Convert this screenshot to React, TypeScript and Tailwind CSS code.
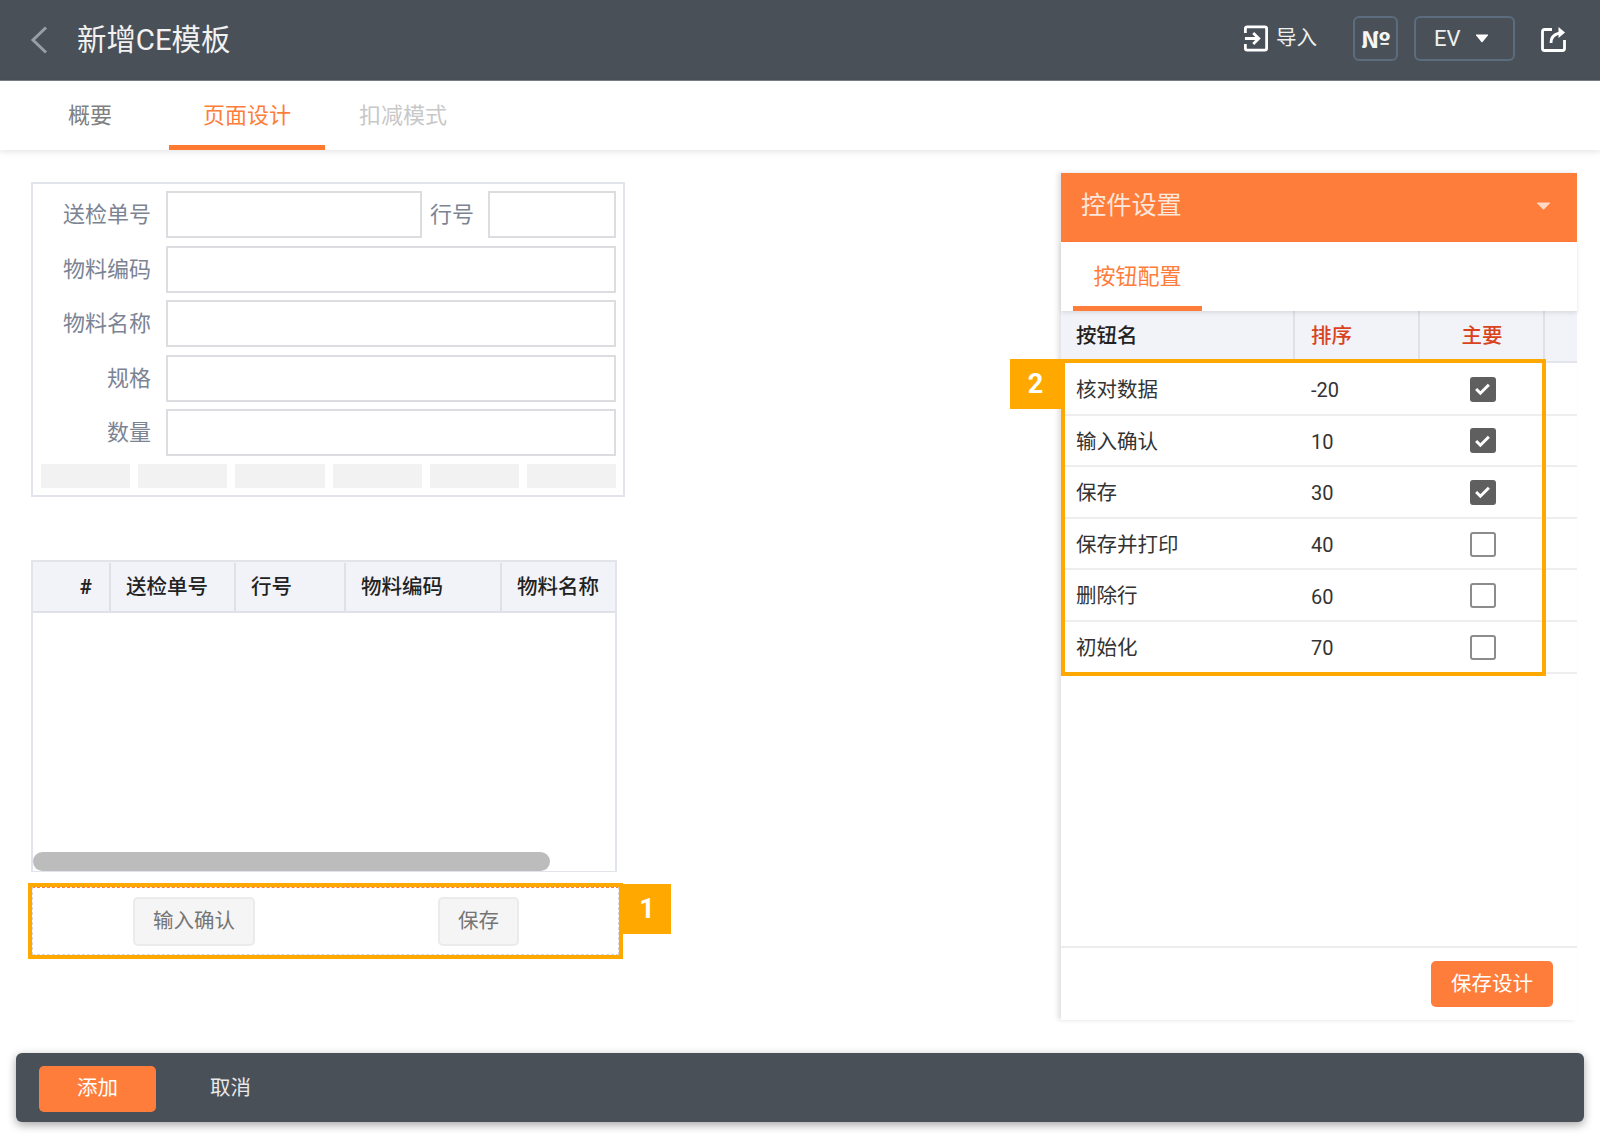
import { useState } from 'react';

const formRows = [
  { label: '物料编码' },
  { label: '物料名称' },
  { label: '规格' },
  { label: '数量' },
];

const buttonRows = [
  { name: '核对数据', sort: '-20', main: true },
  { name: '输入确认', sort: '10', main: true },
  { name: '保存', sort: '30', main: true },
  { name: '保存并打印', sort: '40', main: false },
  { name: '删除行', sort: '60', main: false },
  { name: '初始化', sort: '70', main: false },
];

function Caret({ className }: { className: string }) {
  return (
    <svg className={className} viewBox="0 0 14 10" fill="currentColor" preserveAspectRatio="none">
      <path d="M1 1.5 Q0.4 0.6 1.6 0.6 H12.4 Q13.6 0.6 13 1.5 L7.6 9 Q7 9.6 6.4 9 Z" />
    </svg>
  );
}

function Checkbox({ checked }: { checked: boolean }) {
  if (checked) {
    return (
      <div className="flex h-[25px] w-[26px] items-center justify-center rounded-[3px] bg-[#5f5f5f]">
        <svg width="17" height="14" viewBox="0 0 16 13" fill="none" stroke="#fff" strokeWidth="2.8">
          <path d="M2 6.5 L6 10.5 L14 2.5" />
        </svg>
      </div>
    );
  }
  return <div className="h-[25px] w-[26px] rounded-[3px] border-2 border-[#8c8c8c] bg-white" />;
}

function Badge({ text, className }: { text: string; className: string }) {
  return (
    <div
      className={`absolute flex h-[50px] items-center justify-center bg-[#ffa900] text-[27px] font-bold text-white ${className}`}
    >
      {text}
    </div>
  );
}

export default function App() {
  const [tab] = useState('页面设计');

  return (
    <div className="flex h-[1138px] w-full flex-col overflow-hidden bg-white font-['Roboto','Noto_Sans_CJK_SC',sans-serif]">
      {/* Header */}
      <div className="flex h-[81px] shrink-0 items-center border-b border-[#7b8087] bg-[#4a5058] pr-[33px] pl-[30px]">
        <svg width="18" height="28" viewBox="0 0 18 28" fill="none" stroke="#9a9ea3" strokeWidth="3">
          <path d="M16 1.5 L3 14 L16 26.5" />
        </svg>
        <div className="ml-[29px] text-[29.4px] text-[#f2f2f2]">新增CE模板</div>
        <div className="ml-auto mb-[3px] flex items-center">
          <svg width="24" height="27" viewBox="0 0 26 28" fill="none" stroke="#fff" strokeWidth="3">
            <path d="M1.5 8 V3.5 Q1.5 1.5 3.5 1.5 H22.5 Q24.5 1.5 24.5 3.5 V24.5 Q24.5 26.5 22.5 26.5 H3.5 Q1.5 26.5 1.5 24.5 V20" />
            <path d="M1 14 H15 M10 8 L16 14 L10 20" />
          </svg>
          <span className="ml-[8px] text-[20.5px] text-[#f0f0f0]">导入</span>
          <div className="ml-[36px] flex h-[45px] w-[45px] items-center justify-center rounded-[6px] border-2 border-[#5b6c7e] font-['Noto_Sans_CJK_SC',sans-serif] text-[23px] font-bold text-[#f5f5f5]">
            <span className="inline-block scale-x-[1.2]">№</span>
          </div>
          <div className="ml-[16px] flex h-[45px] w-[101px] items-center rounded-[6px] border-2 border-[#5b6c7e] pl-[18px] text-[22px] text-[#f0f0f0]">
            EV
            <Caret className="ml-[14px] h-[9px] w-[14px] text-white" />
          </div>
          <svg className="ml-[26px]" width="26" height="26" viewBox="0 0 26 26" fill="none" stroke="#fff" strokeWidth="2.8">
            <path d="M11 3.5 H3.5 Q1.5 3.5 1.5 5.5 V22.5 Q1.5 24.5 3.5 24.5 H21.5 Q23.5 24.5 23.5 22.5 V14" />
            <path d="M10 17 Q10 8 20 7" />
            <path d="M17.5 1 L24 6.5 L17.5 12 Z" fill="#fff" stroke="none" />
          </svg>
        </div>
      </div>

      {/* Tabs */}
      <div className="relative z-10 flex h-[69px] shrink-0 items-stretch bg-white pl-[68px] text-[22px] shadow-[0_2px_6px_rgba(0,0,0,0.1)]">
        <div className="mr-[57px] flex items-center text-[#808080]">概要</div>
        <div className="flex items-center border-b-[5px] border-[#ff7a30] px-[34px] pt-[5px] text-[#ff7d3b]">{tab}</div>
        <div className="ml-[34px] flex items-center text-[#c8c8c8]">扣减模式</div>
      </div>

      {/* Main */}
      <div className="flex h-[903px] shrink-0">
        <div className="pt-[32px] pl-[31px]">
          {/* Form */}
          <div className="flex h-[315px] w-[594px] flex-col gap-[7.5px] border-2 border-[#e2e4ec] pt-[7px] pr-[7px] pl-[8px]">
            <div className="flex h-[47px] items-center text-[22px] text-[#7c8494]">
              <div className="w-[110px] text-right">送检单号</div>
              <div className="ml-[15px] h-full w-[256px] border-2 border-[#dcdde0]" />
              <div className="ml-[8px] w-[44px]">行号</div>
              <div className="ml-[14px] h-full flex-1 border-2 border-[#dcdde0]" />
            </div>
            {formRows.map((row) => (
              <div key={row.label} className="flex h-[47px] items-center text-[22px] text-[#7c8494]">
                <div className="w-[110px] text-right">{row.label}</div>
                <div className="ml-[15px] h-full flex-1 border-2 border-[#dcdde0]" />
              </div>
            ))}
            <div className="flex h-[24px] gap-[8px]">
              {[0, 1, 2, 3, 4, 5].map((i) => (
                <div key={i} className="flex-1 bg-[#f2f2f2]" />
              ))}
            </div>
          </div>

          {/* Table */}
          <div className="mt-[63px] flex h-[312px] w-[586px] flex-col border-x-2 border-t-2 border-b border-[#e2e4ec]">
            <div className="flex h-[51px] shrink-0 border-b-2 border-[#dfe1e8] bg-[#f2f3f8] pt-[1px] text-[20.5px] font-medium text-[#222]">
              <div className="flex w-[78px] items-center justify-end border-r-2 border-[#dfe1e8] pr-[17px] font-bold">#</div>
              <div className="flex w-[125px] items-center border-r-2 border-[#dfe1e8] pl-[15px]">送检单号</div>
              <div className="flex w-[110px] items-center border-r-2 border-[#dfe1e8] pl-[15px]">行号</div>
              <div className="flex w-[156px] items-center border-r-2 border-[#dfe1e8] pl-[15px]">物料编码</div>
              <div className="flex flex-1 items-center pl-[15px]">物料名称</div>
            </div>
            <div className="flex flex-1 items-end">
              <div className="h-[19px] w-[517px] rounded-full bg-[#bcbcbc]" />
            </div>
          </div>

          {/* Toolbar */}
          <div className="relative mt-[11px] ml-[-3px] h-[76px] w-[595px] border-4 border-[#ffa900]">
            <div className="flex h-full items-center border border-dashed border-[#d5d7e0] border-t-[#ff7d3b]">
              <div className="ml-[100px] flex h-[49px] w-[122px] items-center justify-center rounded-[5px] border-2 border-[#ebebeb] bg-[#f5f5f5] text-[20.5px] text-[#757575]">
                输入确认
              </div>
              <div className="ml-[183px] flex h-[49px] w-[81px] items-center justify-center rounded-[5px] border-2 border-[#ebebeb] bg-[#f5f5f5] text-[20.5px] text-[#757575]">
                保存
              </div>
            </div>
            <Badge text="1" className="top-[-3px] left-[591px] w-[48px]" />
          </div>
        </div>

        {/* Right panel */}
        <div className="mt-[23px] mr-[23px] ml-auto flex h-[847px] w-[516px] flex-col shadow-[-3px_0_5px_rgba(0,0,0,0.12)]">
          <div className="flex h-[69px] shrink-0 items-center justify-between bg-[#ff7d3b] pr-[26px] pb-[3px] pl-[20px] text-[25.2px] text-[#fde6da]">
            控件设置
            <Caret className="h-[8px] w-[15px] text-[#ffd9c6]" />
          </div>
          <div className="relative z-10 flex h-[69px] shrink-0 bg-white pl-[12px] shadow-[0_2px_4px_rgba(0,0,0,0.1)]">
            <div className="flex w-[129px] items-center justify-center border-b-[5px] border-[#ff7d3b] pt-[5px] text-[22px] text-[#ff7d3b]">
              按钮配置
            </div>
          </div>

          <div className="relative flex-1">
            <div className="grid h-[52px] grid-cols-[234px_125px_125px_1fr] border-b-2 border-[#e4e5ea] bg-[#f2f3f8] text-[20.5px] font-medium">
              <div className="flex items-center border-r-2 border-[#dfe1e8] pl-[15px] text-[#222]">按钮名</div>
              <div className="flex items-center border-r-2 border-[#dfe1e8] pl-[16px] text-[#d8431d]">排序</div>
              <div className="flex items-center justify-center border-r-2 border-[#dfe1e8] pl-[1px] text-[#d8431d]">主要</div>
              <div />
            </div>
            <div className="pt-[1px]">
              {buttonRows.map((row) => (
                <div
                  key={row.name}
                  className="grid h-[51.6px] grid-cols-[234px_125px_125px_1fr] border-b-2 border-[#eeeeee] pt-[1px] text-[#333]"
                >
                  <div className="flex items-center pt-[2px] pl-[15px] text-[20.5px]">{row.name}</div>
                  <div className="flex items-center pt-[2px] pl-[16px] text-[20px]">{row.sort}</div>
                  <div className="flex items-center justify-center">
                    <Checkbox checked={row.main} />
                  </div>
                </div>
              ))}
            </div>

            {/* Highlight over the rows */}
            <div className="pointer-events-none absolute top-[48px] left-0 h-[317px] w-[485px] border-4 border-[#ffa900]" />
            <Badge text="2" className="top-[48px] left-[-51px] w-[51px]" />
          </div>

          <div className="flex h-[74px] shrink-0 items-start justify-end border-t-2 border-[#ececec] pt-[13px] pr-[24px]">
            <div className="flex h-[46px] w-[122px] items-center justify-center rounded-[5px] bg-[#ff7d3b] text-[20.5px] text-white">
              保存设计
            </div>
          </div>
        </div>
      </div>

      {/* Footer */}
      <div className="mx-[16px] flex h-[69px] shrink-0 items-center rounded-[6px] bg-[#4a5058] pt-[2px] pl-[23px] shadow-[0_3px_10px_rgba(0,0,0,0.35)]">
        <div className="flex h-[46px] w-[117px] items-center justify-center rounded-[5px] bg-[#ff7d3b] text-[20.5px] text-white">
          添加
        </div>
        <div className="ml-[54px] text-[20.5px] text-[#e8e8e8]">取消</div>
      </div>
    </div>
  );
}
